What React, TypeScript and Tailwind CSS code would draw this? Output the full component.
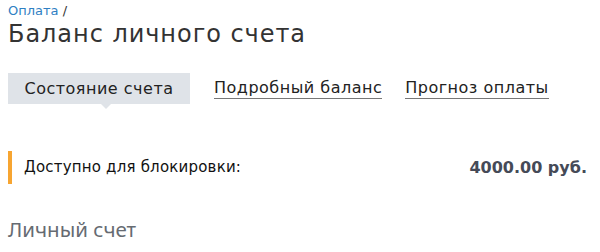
const font = { fontFamily: '"DejaVu Sans", Verdana, sans-serif' };
const headFont = { fontFamily: '"Noto Sans", "DejaVu Sans", sans-serif' };

export default function App() {
  return (
    <div className="h-[252px] w-[600px] overflow-hidden bg-white px-2" style={font}>
      <div className="pt-[3px] text-[13px] leading-[16px] text-[#333]">
        <a className="text-[#2f80c3]">Оплата</a> /
      </div>
      <h1 className="text-[24px] leading-[30px] tracking-[0.95px] text-[#333]">Баланс личного счета</h1>

      <div className="mt-[24px] flex items-start">
        <div className="relative flex h-[31px] w-[182px] items-center justify-center bg-[#dfe3e8] text-[16px] tracking-[0.5px] text-[#222]">
          Состояние счета
          <span className="absolute top-full left-[93px] h-0 w-0 border-x-[5px] border-t-[5px] border-x-transparent border-t-[#dfe3e8]" />
        </div>
        <a className="ml-[24px] mt-[5px] border-b border-[#777] text-[16px] leading-[20px] tracking-[0.5px] text-[#222]">
          Подробный баланс
        </a>
        <a className="ml-[23px] mt-[5px] border-b border-[#777] text-[16px] leading-[20px] tracking-[0.5px] text-[#222]">
          Прогноз оплаты
        </a>
      </div>

      <div className="mt-[47px] flex h-[33px] items-center border-l-4 border-[#f7a531] pl-3 pr-[5px]">
        <span className="text-[15px] tracking-[0.2px] text-[#111]">Доступно для блокировки:</span>
        <span className="ml-auto text-[16px] font-bold text-[#454a57]">4000.00 руб.</span>
      </div>

      <h2 className="mt-[31px] text-[20.5px] leading-[28px] text-[#666b72]" style={headFont}>
        Личный счет
      </h2>
    </div>
  );
}
